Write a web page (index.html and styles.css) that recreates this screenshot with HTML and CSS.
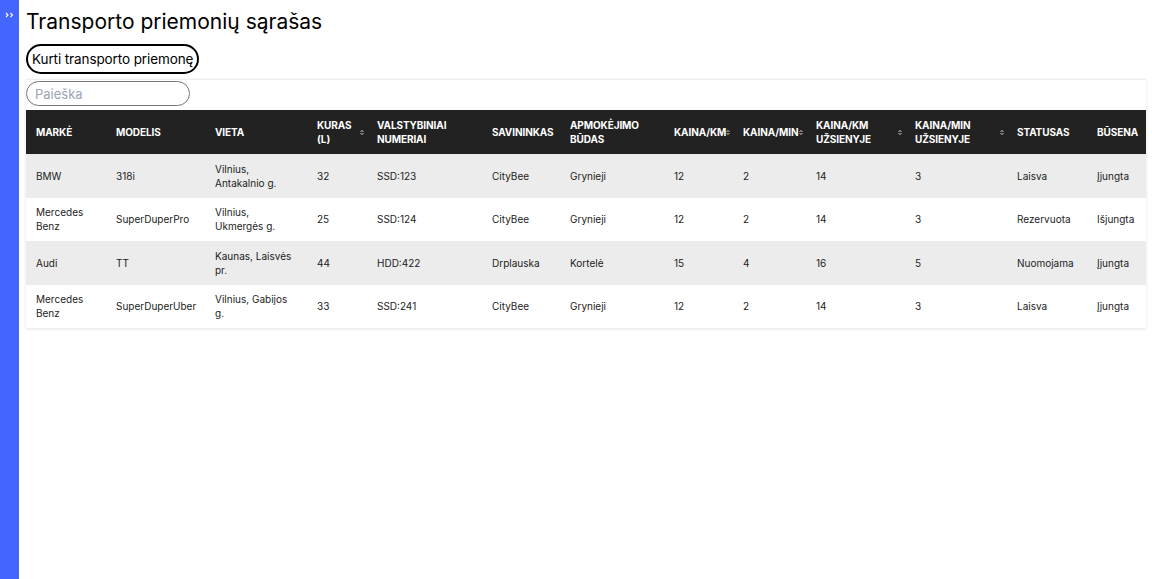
FILE: index.html
```html
<!DOCTYPE html>
<html lang="lt">
	<head>
		<meta charset="UTF-8">
		<title>Transporto priemonių sąrašas</title>
		<link rel="stylesheet" href="styles.css">
	</head>
	<body>
		<div class="layout">
			<aside class="sidebar">
				<svg class="toggle" width="9" height="6" viewBox="0 0 9 6">
					<path d="M1 1l2 2-2 2M5.5 1l2 2-2 2" fill="none" stroke="#fff" stroke-width="1.1"/>
				</svg>
			</aside>
			<main class="content">
				<h1 class="title">Transporto priemonių sąrašas</h1>
				<button class="btn-create">Kurti transporto priemonę</button>
				<div class="card">
					<input class="search" type="text" placeholder="Paieška">
					<table class="vehicles">
						<colgroup>
							<col class="c-marke"><col class="c-modelis"><col class="c-vieta"><col class="c-kuras">
							<col class="c-nr"><col class="c-sav"><col class="c-apm"><col class="c-km">
							<col class="c-min"><col class="c-kmu"><col class="c-minu"><col class="c-stat"><col class="c-bus">
						</colgroup>
						<thead>
							<tr>
								<th>Markė</th>
								<th>Modelis</th>
								<th>Vieta</th>
								<th class="sortable">Kuras (L)</th>
								<th>Valstybiniai numeriai</th>
								<th>Savininkas</th>
								<th>Apmokėjimo būdas</th>
								<th class="sortable">Kaina/km</th>
								<th class="sortable">Kaina/min</th>
								<th class="sortable">Kaina/km užsienyje</th>
								<th class="sortable">Kaina/min užsienyje</th>
								<th>Statusas</th>
								<th>Būsena</th>
							</tr>
						</thead>
						<tbody>
							<tr>
								<td>BMW</td><td>318i</td><td>Vilnius, Antakalnio g.</td><td>32</td><td>SSD:123</td><td>CityBee</td><td>Grynieji</td><td>12</td><td>2</td><td>14</td><td>3</td><td>Laisva</td><td>Įjungta</td>
							</tr>
							<tr>
								<td>Mercedes Benz</td><td>SuperDuperPro</td><td>Vilnius, Ukmergės g.</td><td>25</td><td>SSD:124</td><td>CityBee</td><td>Grynieji</td><td>12</td><td>2</td><td>14</td><td>3</td><td>Rezervuota</td><td>Išjungta</td>
							</tr>
							<tr>
								<td>Audi</td><td>TT</td><td>Kaunas, Laisvės pr.</td><td>44</td><td>HDD:422</td><td>Drplauska</td><td>Kortelė</td><td>15</td><td>4</td><td>16</td><td>5</td><td>Nuomojama</td><td>Įjungta</td>
							</tr>
							<tr>
								<td>Mercedes Benz</td><td>SuperDuperUber</td><td>Vilnius, Gabijos g.</td><td>33</td><td>SSD:241</td><td>CityBee</td><td>Grynieji</td><td>12</td><td>2</td><td>14</td><td>3</td><td>Laisva</td><td>Įjungta</td>
							</tr>
						</tbody>
					</table>
				</div>
			</main>
		</div>
	</body>
</html>
```

FILE: styles.css
```css
* {
	box-sizing: border-box;
}
body {
	margin: 0;
	font-family: "Inter", "Noto Sans", sans-serif;
	color: #222;
	background: #fff;
}
.layout {
	display: flex;
	min-height: 579px;
}
.sidebar {
	width: 19px;
	flex-shrink: 0;
	background: #4466ff;
	display: flex;
	justify-content: center;
	align-items: flex-start;
	padding-top: 12px;
}
.toggle {
	display: block;
}
.content {
	flex: 1;
	padding: 0 6px 0 7px;
}
.title {
	margin: 10px 0 10px;
	font-size: 21px;
	font-weight: 400;
	line-height: 24px;
	color: #000;
}
.btn-create {
	display: block;
	height: 30px;
	padding: 0 4px;
	border: 2px solid #000;
	border-radius: 15px;
	background: #fff;
	font: 400 13.5px "Inter", "Noto Sans", sans-serif;
	letter-spacing: -0.1px;
	color: #000;
}
.card {
	margin-top: 5px;
	border-top: 1px solid #eee;
	box-shadow: 0 1px 3px rgba(0, 0, 0, 0.12);
}
.search {
	display: block;
	width: 164px;
	height: 25px;
	margin-top: 1px;
	padding: 0 8px;
	border: 1px solid #777;
	border-radius: 13px;
	font: 400 13px "Inter", "Noto Sans", sans-serif;
	color: #222;
	outline: none;
}
.search::placeholder {
	color: #9aa4b8;
}
.vehicles {
	width: 100%;
	margin-top: 4px;
	border-collapse: collapse;
	table-layout: fixed;
	font-size: 10px;
}
.c-marke { width: 80px; }
.c-modelis { width: 99px; }
.c-vieta { width: 102px; }
.c-kuras { width: 60px; }
.c-nr { width: 115px; }
.c-sav { width: 78px; }
.c-apm { width: 104px; }
.c-km { width: 69px; }
.c-min { width: 73px; }
.c-kmu { width: 99px; }
.c-minu { width: 102px; }
.c-stat { width: 80px; }
.c-bus { width: 59px; }
.vehicles th {
	height: 44px;
	padding: 0 10px;
	background: #222;
	color: #fff;
	font-weight: 700;
	text-transform: uppercase;
	text-align: left;
	line-height: 14px;
	letter-spacing: -0.1px;
}
.vehicles th.sortable {
	position: relative;
	padding-right: 8px;
}
.vehicles th.sortable::after {
	content: "";
	position: absolute;
	right: 3px;
	top: 50%;
	width: 4px;
	height: 7px;
	margin-top: -3px;
	background:
		linear-gradient(to bottom right, transparent 50%, #777 50%) 0 0 / 2px 3px no-repeat,
		linear-gradient(to bottom left, transparent 50%, #777 50%) 2px 0 / 2px 3px no-repeat,
		linear-gradient(to top right, transparent 50%, #777 50%) 0 4px / 2px 3px no-repeat,
		linear-gradient(to top left, transparent 50%, #777 50%) 2px 4px / 2px 3px no-repeat;
}
.vehicles td {
	height: 43.5px;
	padding: 0 10px;
	line-height: 14px;
	color: #222;
}
.vehicles tbody tr:nth-child(odd) {
	background: #ececec;
}
```
